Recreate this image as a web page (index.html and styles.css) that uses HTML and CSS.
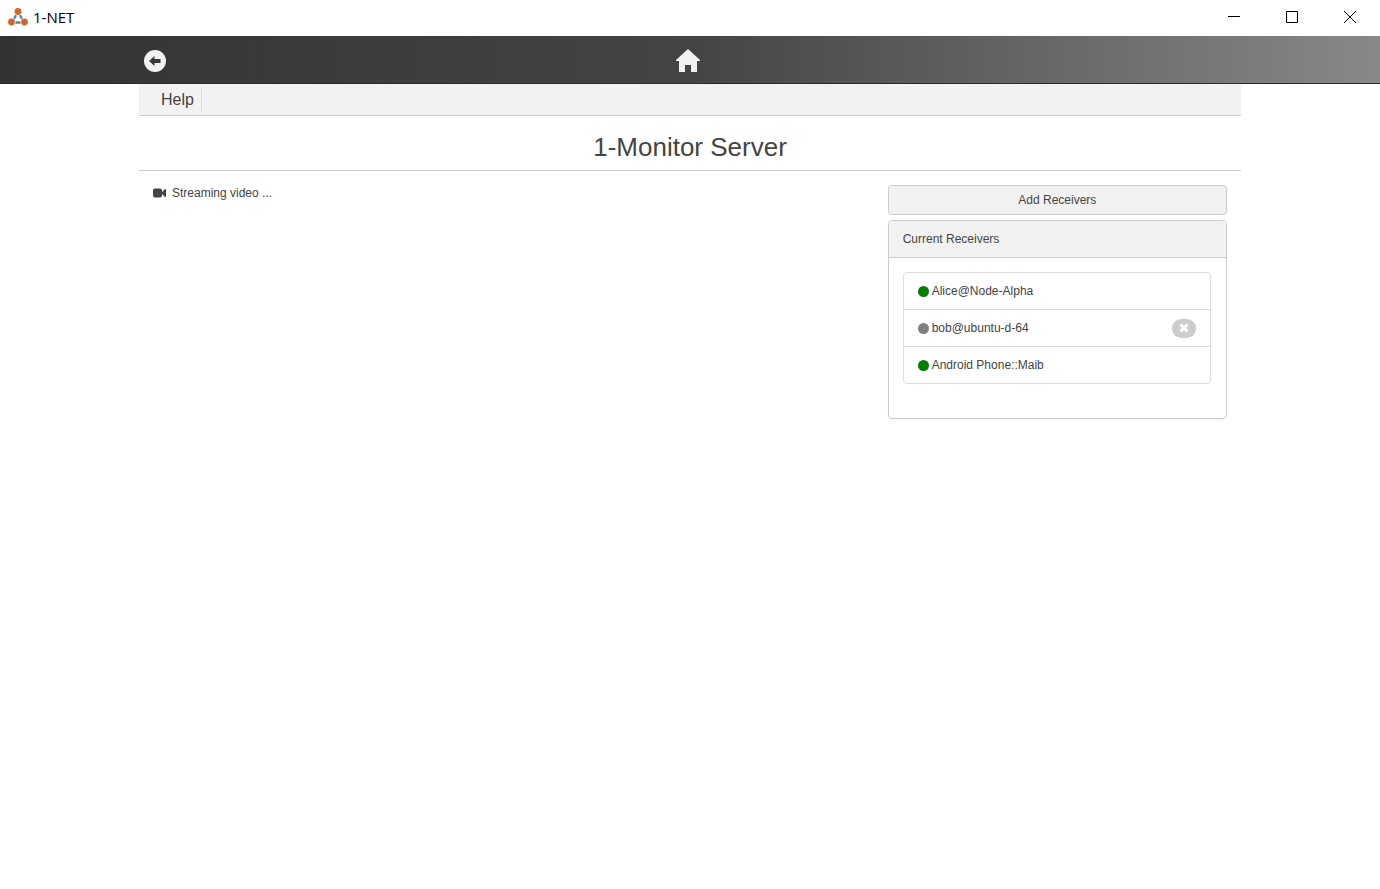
FILE: index.html
```
<!DOCTYPE html>
<html lang="en">

<head>
    <meta charset="UTF-8">
    <meta name="viewport" content="width=device-width, initial-scale=1.0">
    <title>1-NET</title>
    <link rel="stylesheet" href="styles.css">
</head>

<body>
    <header class="titlebar">
        <svg class="logo" width="20" height="20" viewBox="0 0 20 20">
            <path d="M10 4.5L4 15.5H16Z" fill="none" stroke="#4d8aac" stroke-width="2.4" />
            <g fill="#fff">
                <circle cx="10" cy="4.5" r="4.2" />
                <circle cx="3.5" cy="15" r="4.2" />
                <circle cx="16.5" cy="15" r="4.2" />
            </g>
            <g fill="#d66426">
                <circle cx="10" cy="4.5" r="3.4" />
                <circle cx="3.5" cy="15" r="3.4" />
                <circle cx="16.5" cy="15" r="3.4" />
            </g>
        </svg>
        <span class="app-name">1-NET</span>
        <div class="window-buttons">
            <button type="button" aria-label="Minimize">
                <svg width="12" height="12" viewBox="0 0 12 12"><path d="M0 5.5H12" /></svg>
            </button>
            <button type="button" aria-label="Maximize">
                <svg width="12" height="12" viewBox="0 0 12 12"><path d="M.5 .5H11.5V11.5H.5Z" /></svg>
            </button>
            <button type="button" aria-label="Close">
                <svg width="12" height="12" viewBox="0 0 12 12"><path d="M0 0L12 12M12 0L0 12" /></svg>
            </button>
        </div>
    </header>

    <nav class="navbar">
        <div class="container nav-inner">
            <a href="#" class="nav-back" aria-label="Back">
                <svg width="22" height="22" viewBox="0 0 22 22">
                    <circle cx="11" cy="11" r="11" fill="#f2f2f2" />
                    <path d="M5 11L10.5 6V9H16.5V13H10.5V16Z" fill="#383838" />
                </svg>
            </a>
            <a href="#" class="nav-home" aria-label="Home">
                <svg width="24" height="24" viewBox="0 0 24 24">
                    <path d="M12 0L24 11V12H21V23H15V16H9V23H3V12H0V11Z" fill="#f2f2f2" />
                </svg>
            </a>
        </div>
    </nav>

    <main class="container">
        <div class="menu">
            <a href="#" class="menu-item">Help</a>
        </div>

        <h1>1-Monitor Server</h1>

        <div class="content">
            <div class="column">
                <p class="status">
                    <svg width="13" height="10" viewBox="0 0 13 10">
                        <path d="M2 .5H7Q9 .5 9 2.5V4L12 1H13V9H12L9 6V7.5Q9 9.5 7 9.5H2Q0 9.5 0 7.5V2.5Q0 .5 2 .5Z" fill="#444" />
                    </svg>
                    Streaming video ...
                </p>
            </div>

            <div class="column">
                <button type="button" class="button">Add Receivers</button>
                <section class="panel">
                    <h2>Current Receivers</h2>
                    <ul class="receivers">
                        <li><span class="dot online"></span>Alice@Node-Alpha</li>
                        <li>
                            <span class="dot"></span>bob@ubuntu-d-64
                            <button type="button" class="remove" aria-label="Remove bob@ubuntu-d-64">
                                <svg width="10" height="10" viewBox="0 0 10 10">
                                    <path d="M1.5 1.5L8.5 8.5M8.5 1.5L1.5 8.5" fill="none" stroke="#fff" stroke-width="3.2" />
                                </svg>
                            </button>
                        </li>
                        <li><span class="dot online"></span>Android Phone::Maib</li>
                    </ul>
                </section>
            </div>
        </div>
    </main>
</body>

</html>
```
FILE: styles.css
```
* {
    box-sizing: border-box;
}

body {
    font-family: "Liberation Sans", Arial, sans-serif;
    font-size: 12px;
    line-height: 16px;
    margin: 0;
    background: #fff;
    color: #444;
}

button {
    font: inherit;
    color: inherit;
    padding: 0;
    cursor: pointer;
}

svg {
    display: block;
}

.container {
    max-width: 1102px;
    margin: 0 auto;
}

/* window title bar */
.titlebar {
    display: flex;
    align-items: center;
    height: 36px;
    padding: 0 1px 2px 8px;
    color: #000;
}

.app-name {
    font-family: "Open Sans", "Noto Sans", sans-serif;
    font-size: 15px;
    margin-left: 5px;
}

.window-buttons {
    display: flex;
    margin-left: auto;
}

.window-buttons button {
    display: flex;
    align-items: center;
    justify-content: center;
    width: 58px;
    height: 34px;
    border: none;
    background: none;
}

.window-buttons path {
    fill: none;
    stroke: #000;
}

/* navigation */
.navbar {
    background: linear-gradient(to right, #333, #444 50%, #888);
    border-bottom: 1px solid #2a2a2a;
}

.nav-inner {
    display: grid;
    grid-template-columns: 1fr auto 1fr;
    align-items: center;
    height: 47px;
    padding: 2px 5px 0;
}

.nav-back {
    justify-self: start;
}

.nav-home {
    padding-right: 4px;
}

.menu {
    display: flex;
    align-items: center;
    height: 32px;
    padding-left: 14px;
    background: #f2f2f2;
    border-bottom: 1px solid #ccc;
}

.menu-item {
    padding: 0 7px 0 8px;
    border-right: 1px solid #ddd;
    color: #444;
    font-size: 16px;
    line-height: 24px;
    text-decoration: none;
}

h1 {
    margin: 0;
    padding: 16px 0 8px;
    border-bottom: 1px solid #ccc;
    font-size: 26px;
    font-weight: normal;
    line-height: 30px;
    text-align: center;
}

.content {
    display: grid;
    grid-template-columns: 2fr 1fr;
}

.column {
    padding: 14px;
}

.status {
    display: flex;
    align-items: center;
    gap: 6px;
    margin: 0;
}

.button {
    display: block;
    width: 100%;
    height: 30px;
    background: #f2f2f2;
    border: 1px solid #ccc;
    border-radius: 4px;
}

.panel {
    margin-top: 5px;
    border: 1px solid #ccc;
    border-radius: 4px;
    box-shadow: 0 1px 1px rgba(0, 0, 0, 0.05);
}

.panel h2 {
    margin: 0;
    padding: 10px 14px;
    background: #f2f2f2;
    border-bottom: 1px solid #ccc;
    border-radius: 3px 3px 0 0;
    font-size: 12px;
    font-weight: normal;
}

.receivers {
    margin: 14px 15px 34px 14px;
    padding: 0;
    border: 1px solid #ddd;
    border-radius: 4px;
    list-style: none;
}

.receivers li {
    display: flex;
    align-items: center;
    height: 37px;
    padding: 0 14px;
}

.receivers li:first-child {
    height: 36px;
}

.receivers li + li {
    border-top: 1px solid #ddd;
}

.dot {
    width: 11px;
    height: 11px;
    margin-right: 3px;
    border-radius: 50%;
    background: #808080;
}

.dot.online {
    background: #008000;
}

.remove {
    display: flex;
    align-items: center;
    justify-content: center;
    width: 24px;
    height: 19px;
    margin-left: auto;
    border: none;
    border-radius: 10px;
    background: #ccc;
}
```
